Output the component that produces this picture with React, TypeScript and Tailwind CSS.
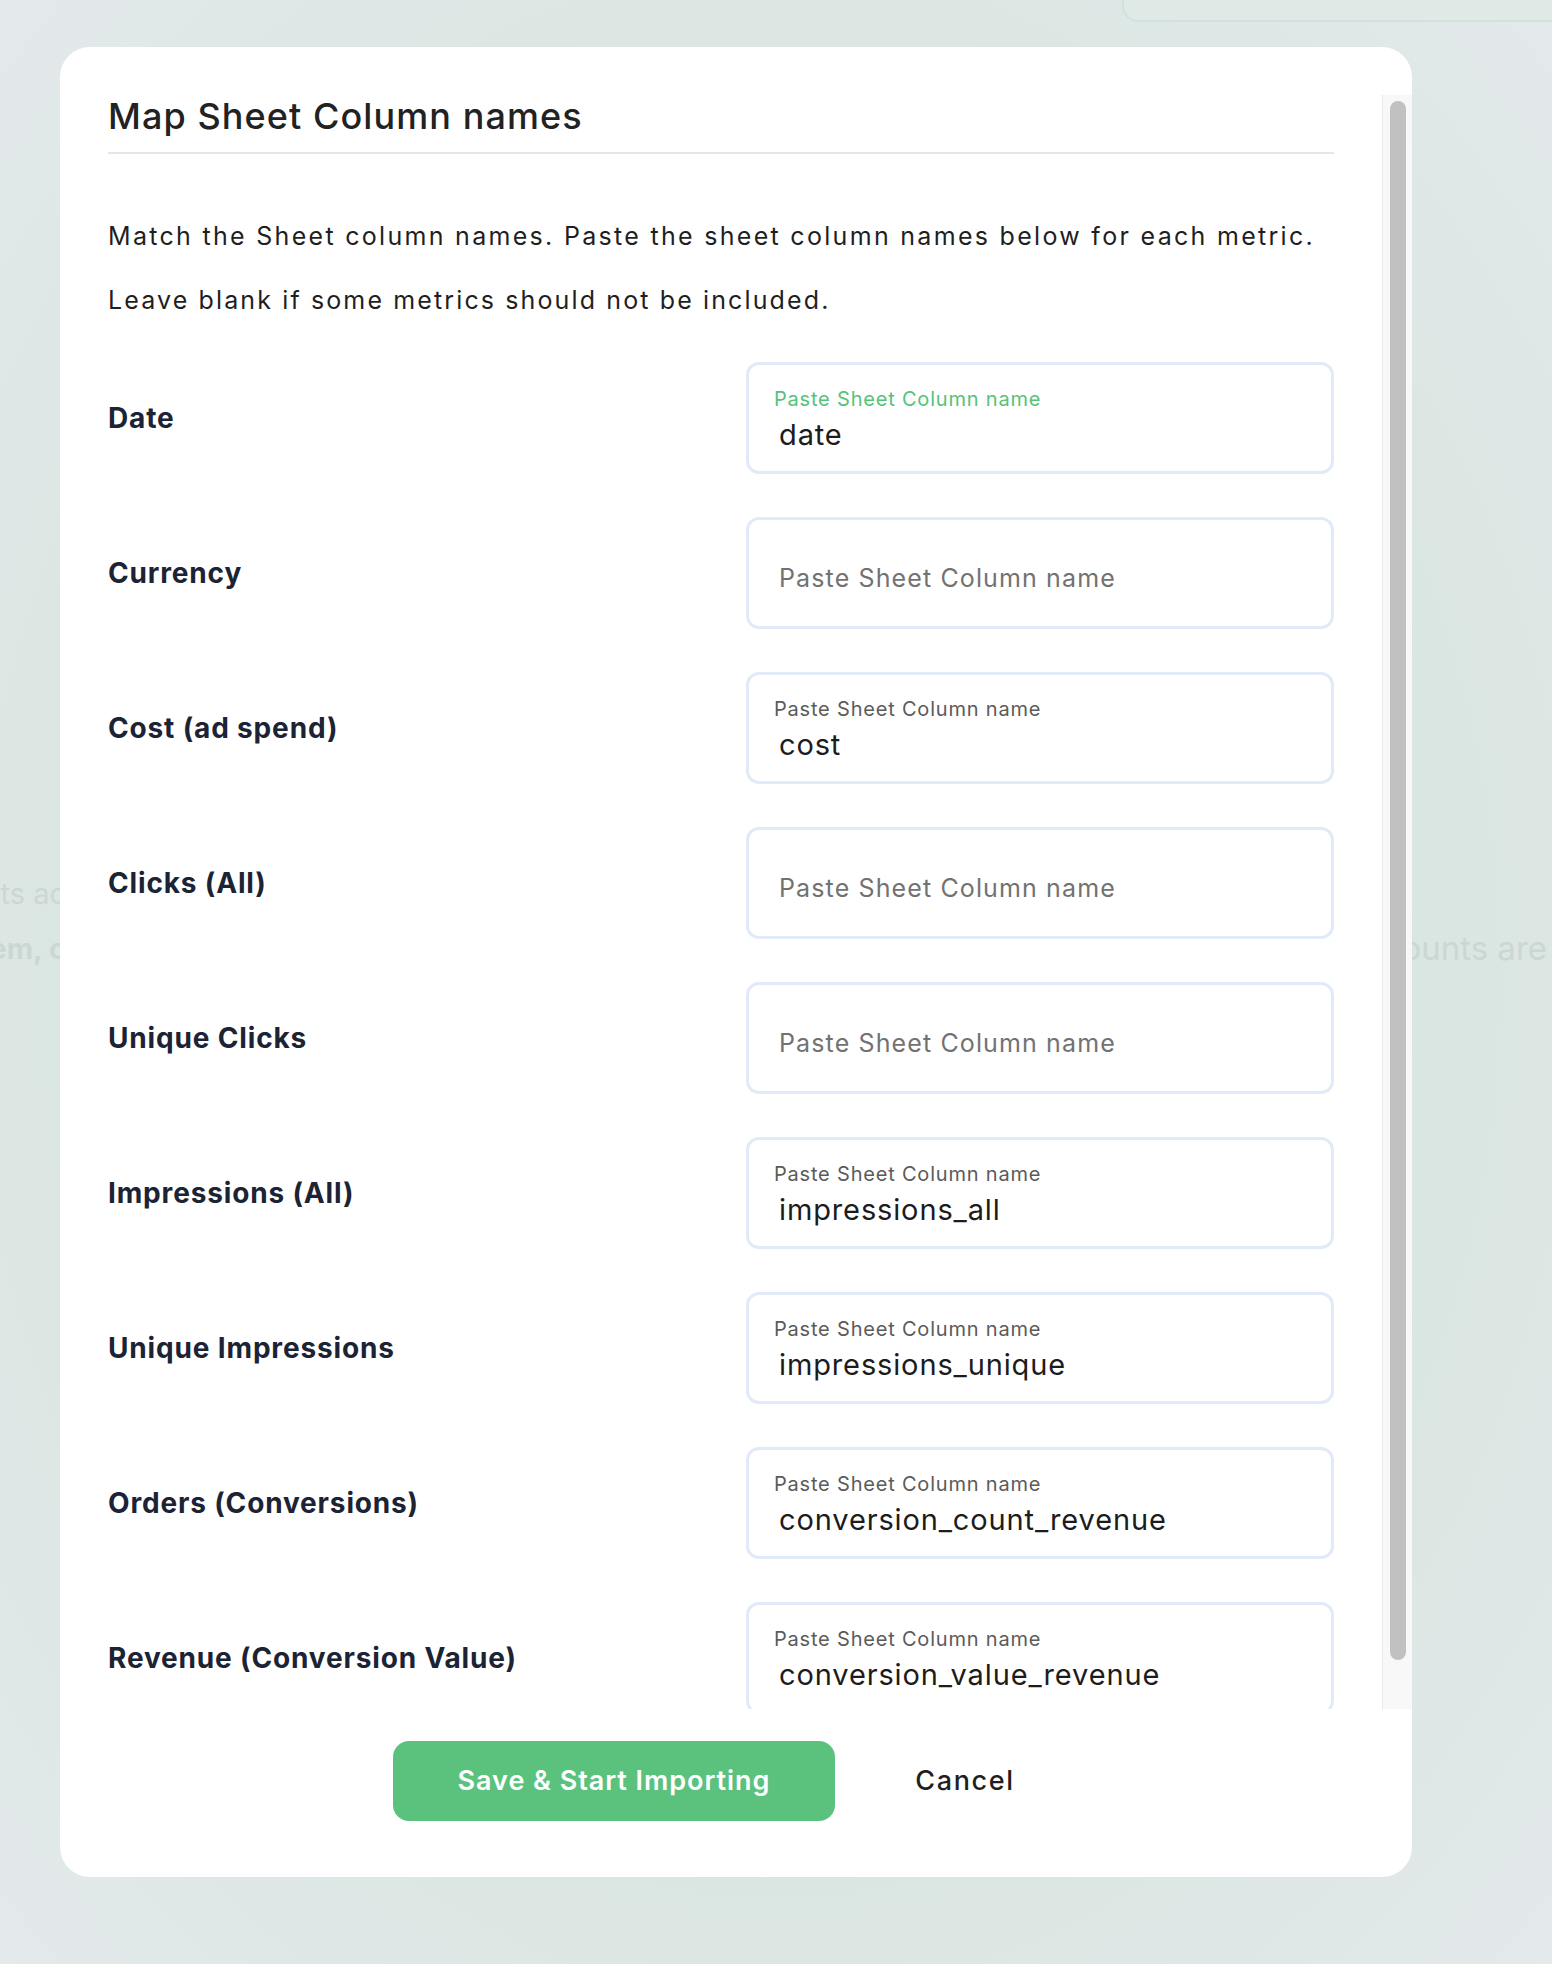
import React from 'react';

type Row = { label: string; value?: string; focused?: boolean };

const rows: Row[] = [
  { label: 'Date', value: 'date', focused: true },
  { label: 'Currency' },
  { label: 'Cost (ad spend)', value: 'cost' },
  { label: 'Clicks (All)' },
  { label: 'Unique Clicks' },
  { label: 'Impressions (All)', value: 'impressions_all' },
  { label: 'Unique Impressions', value: 'impressions_unique' },
  { label: 'Orders (Conversions)', value: 'conversion_count_revenue' },
  { label: 'Revenue (Conversion Value)', value: 'conversion_value_revenue' },
];

function ColumnField({ row }: { row: Row }) {
  // filled fields show a floating label above the value
  if (row.value) {
    return (
      <div className="w-[588px] h-[112px] rounded-[13px] border-[3px] border-[#e1eaf8] bg-white pt-[22px]">
        <div
          className={
            'pl-[25px] text-[20px] leading-[24px] tracking-[0.04em] ' +
            (row.focused ? 'text-[#55c279]' : 'text-[#5b5b5b]')
          }
        >
          Paste Sheet Column name
        </div>
        <div className="pl-[30px] mt-[7px] text-[29px] leading-[34px] tracking-[0.03em] text-[#1c1c1c]">
          {row.value}
        </div>
      </div>
    );
  }
  return (
    <div className="w-[588px] h-[112px] rounded-[13px] border-[3px] border-[#e1eaf8] bg-white pt-[43px]">
      <div className="pl-[30px] text-[25px] leading-[30px] tracking-[0.045em] text-[#727272]">
        Paste Sheet Column name
      </div>
    </div>
  );
}

export default function App() {
  return (
    <div className="relative w-full h-[1964px] overflow-hidden bg-[radial-gradient(ellipse_at_center,#d4e5dd_0%,#d9e6e1_60%,#e4e9eb_100%)] font-['Inter',sans-serif]">
      {/* page behind the dialog */}
      <div className="absolute right-[-20px] top-[-30px] w-[450px] h-[52px] rounded-[16px] border-2 border-[#d2e1db] bg-[#dfe9e6]" />
      <div className="pt-[866px] leading-[55px] text-[#ccd7d3]">
        <div className="w-[66px] overflow-hidden whitespace-nowrap flex justify-end text-[29px]">
          <span>ad accounts ac</span>
        </div>
        <div className="flex justify-between">
          <div className="w-[66px] overflow-hidden whitespace-nowrap flex justify-end font-bold text-[29px]">
            <span>them, c</span>
          </div>
          <span className="mr-[5px] whitespace-nowrap text-[33px]">accounts are</span>
        </div>
      </div>

      {/* dialog */}
      <div className="absolute left-[60px] top-[47px] w-[1352px] rounded-[30px] bg-white overflow-hidden">
        <div className="pt-[48px] flex">
          <div className="flex-1 h-[1614px] overflow-hidden px-12">
            <div className="pt-px">
              <h2 className="text-[36px] leading-[40px] font-medium tracking-[0.03em] text-[#222222] pb-4 border-b-2 border-[#e6e6e6]">
                Map Sheet Column names
              </h2>
              <p className="mt-[50px] text-[25px] leading-[64px] text-[#1f1f1f] tracking-[0.092em] whitespace-nowrap">
                Match the Sheet column names. Paste the sheet column names below for each metric.
              </p>
              <p className="text-[25px] leading-[64px] text-[#1f1f1f] tracking-[0.085em]">
                Leave blank if some metrics should not be included.
              </p>
              <div className="mt-[30px] flex flex-col gap-[43px] pb-10">
                {rows.map((row) => (
                  <div key={row.label} className="flex items-center justify-between">
                    <div className="text-[28px] leading-[34px] font-bold tracking-[0.03em] text-[#1b2334]">
                      {row.label}
                    </div>
                    <ColumnField row={row} />
                  </div>
                ))}
              </div>
            </div>
          </div>
          {/* scrollbar */}
          <div className="w-[30px] h-[1614px] bg-[#f8f8f8] border-l border-[#e9e9e9] pl-[7px] pr-[5px] pt-[6px]">
            <div className="w-[16px] h-[1559px] rounded-full bg-[#c1c1c1]" />
          </div>
        </div>
        <div className="flex justify-center pt-8 pb-14">
          <button className="w-[442px] h-[80px] rounded-[16px] bg-[#5bc27e] text-white text-[27px] font-semibold tracking-[0.035em]">
            Save &amp; Start Importing
          </button>
          <button className="w-[244px] h-[80px] pl-[16px] text-[27px] font-medium tracking-[0.06em] text-[#1f1f1f]">
            Cancel
          </button>
        </div>
      </div>
    </div>
  );
}
